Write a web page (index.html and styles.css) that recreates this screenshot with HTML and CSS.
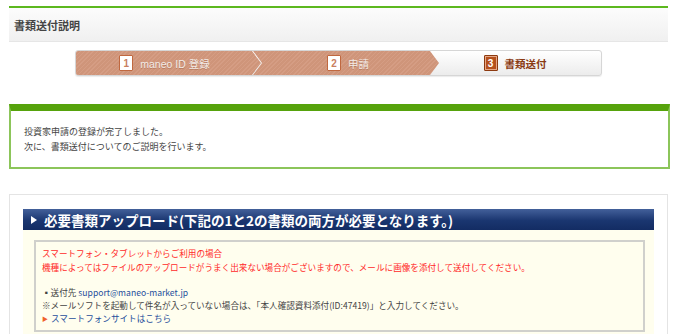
FILE: index.html
```html
<!DOCTYPE html>
<html lang="ja">
<head>
    <meta charset="UTF-8">
    <meta name="viewport" content="width=device-width, initial-scale=1.0">
    <title>書類送付説明</title>
    <link rel="stylesheet" href="styles.css">
</head>
<body>
    <div class="page">
        <div class="page-header">
            <h1>書類送付説明</h1>
        </div>

        <div class="steps">
            <div class="step step-first done">
                <span class="num">1</span>
                <span class="label">maneo ID 登録</span>
            </div>
            <div class="step done">
                <span class="num">2</span>
                <span class="label">申請</span>
            </div>
            <div class="step current">
                <span class="num">3</span>
                <span class="label">書類送付</span>
            </div>
        </div>

        <div class="notice">
            <p>投資家申請の登録が完了しました。</p>
            <p>次に、書類送付についてのご説明を行います。</p>
        </div>

        <div class="panel">
            <h2 class="panel-title">
                <span class="arrow"></span>必要書類アップロード(下記の1と2の書類の両方が必要となります。)
            </h2>
            <div class="panel-body">
                <div class="info-box">
                    <p class="warn">スマートフォン・タブレットからご利用の場合<br>機種によってはファイルのアップロードがうまく出来ない場合がございますので、メールに画像を添付して送付してください。</p>
                    <p class="mail">▪送付先 <a href="#">support@maneo-market.jp</a></p>
                    <p>※メールソフトを起動して件名が入っていない場合は、「本人確認資料添付(ID:47419)」と入力してください。</p>
                    <p class="link"><span class="tri">▶</span><a href="#">スマートフォンサイトはこちら</a></p>
                </div>
            </div>
        </div>
    </div>
</body>
</html>
```
FILE: styles.css
```css
body {
    margin: 0;
    background-color: #ffffff;
    color: #333333;
    font-family: "Liberation Sans", "Noto Sans CJK JP", sans-serif;
}
p {
    margin: 0;
}
a {
    color: #1f4f9c;
    text-decoration: none;
}
.page {
    width: 659px;
    margin-left: 9px;
    padding-top: 6px;
}
.page-header {
    height: 33px;
    display: flex;
    align-items: center;
    padding-left: 5px;
    border-top: 2px solid #5cb81e;
    border-bottom: 1px solid #e6e6e6;
    background: linear-gradient(#fcfcfc, #f0f0f0);
}
.page-header h1 {
    margin: 0;
    font-size: 11px;
    font-weight: bold;
    color: #444444;
}
.steps {
    display: flex;
    width: 525px;
    height: 24px;
    margin: 8px 0 0 66px;
    border: 1px solid #d6d6d6;
    border-radius: 3px;
    overflow: hidden;
    background: linear-gradient(#ffffff, #ececec);
    box-shadow: 0 1px 1px rgba(0, 0, 0, 0.08);
}
.step {
    display: flex;
    align-items: center;
    justify-content: center;
    gap: 7px;
    font-size: 10.5px;
}
.step.done {
    width: 186px;
    margin-left: -8px;
    padding-left: 4px;
    box-sizing: border-box;
    color: #f2ebe7;
    text-shadow: 0 1px 0 rgba(120, 60, 30, 0.3);
    background: repeating-linear-gradient(135deg, #d59d84 0 1px, #cf957a 1px 3px);
    clip-path: polygon(0 0, calc(100% - 9px) 0, 100% 50%, calc(100% - 9px) 100%, 0 100%, 9px 50%);
}
.step.step-first {
    width: 185px;
    margin-left: 0;
    padding-left: 0;
    padding-right: 8px;
    clip-path: polygon(0 0, calc(100% - 9px) 0, 100% 50%, calc(100% - 9px) 100%, 0 100%);
}
.step.current {
    flex: 1;
    padding-right: 10px;
    color: #8a3a12;
    font-weight: bold;
}
.num {
    width: 12px;
    height: 14px;
    display: flex;
    align-items: center;
    justify-content: center;
    font-size: 10px;
    font-weight: bold;
    text-shadow: none;
    background-color: #ffffff;
    color: #c9805f;
    border: 1px solid #c0683f;
    border-radius: 1px;
}
.current .num {
    background-color: #b5501c;
    color: #ffffff;
    border-color: #8c3a10;
    box-shadow: inset 0 0 0 1px #e6a888;
}
.notice {
    margin-top: 28px;
    width: 631px;
    padding: 13px;
    border: 2px solid #8cc55a;
    border-top: 7px solid #56a30c;
    font-family: "Noto Sans CJK JP", sans-serif;
    font-size: 9px;
    line-height: 15px;
    color: #444444;
}
.panel {
    margin-top: 25px;
    padding: 14px 13px 0 13px;
    border: 1px solid #e4e4e4;
    border-bottom: none;
}
.panel-title {
    margin: 0;
    height: 21px;
    display: flex;
    align-items: center;
    padding-left: 8px;
    font-family: "Noto Sans CJK JP", sans-serif;
    font-size: 13.5px;
    font-weight: bold;
    color: #ffffff;
    background: linear-gradient(#43609a, #1a3670 55%, #132c63);
}
.arrow {
    width: 0;
    height: 0;
    margin-right: 7px;
    border-top: 4px solid transparent;
    border-bottom: 4px solid transparent;
    border-left: 6px solid #ffffff;
}
.panel-body {
    padding: 10px 9px 8px 11px;
    background-color: #fffeee;
}
.info-box {
    padding: 5px 6px;
    border: 2px solid #d0d0cc;
    font-family: "Noto Sans CJK JP", sans-serif;
    font-size: 8.6px;
    line-height: 13px;
    color: #444444;
}
.warn {
    color: #ff2a2a;
    line-height: 13.5px;
    margin-bottom: 12px;
}
.link .tri {
    font-size: 6px;
    color: #f0602a;
    margin-right: 3px;
    vertical-align: 1px;
}
```
